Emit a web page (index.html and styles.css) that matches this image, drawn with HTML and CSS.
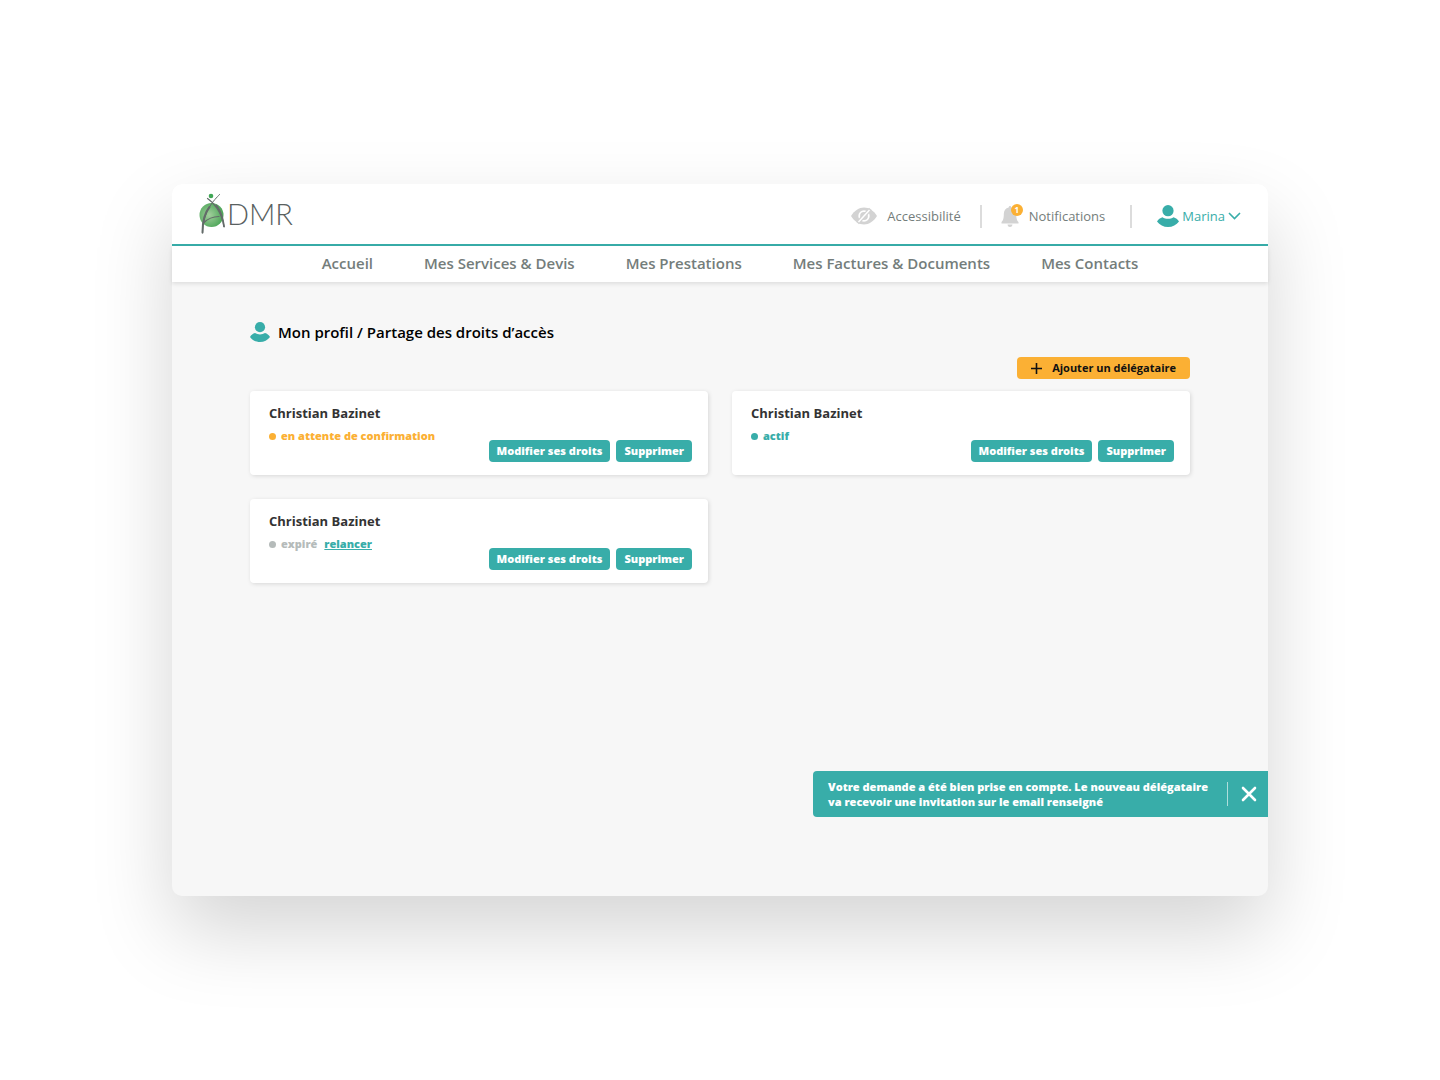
FILE: index.html
```html
<!DOCTYPE html>
<html lang="fr">
<head>
    <meta charset="UTF-8">
    <meta name="viewport" content="width=device-width, initial-scale=1.0">
    <title>ADMR - Partage des droits d’accès</title>
    <link rel="stylesheet" href="styles.css">
</head>
<body>
    <div class="window">
        <header class="header">
            <a class="logo" href="#" aria-label="ADMR">
                <svg width="28" height="42" viewBox="0 0 28 42">
                    <defs>
                        <radialGradient id="globe" cx="40%" cy="50%" r="60%">
                            <stop offset="0" stop-color="#a3cf9d"/>
                            <stop offset="1" stop-color="#4ba557"/>
                        </radialGradient>
                    </defs>
                    <circle cx="12.500" cy="22" r="12" fill="url(#globe)"/>
                    <circle cx="12" cy="3" r="2.300" fill="#3fa655"/>
                    <g fill="none" stroke="#636b69" stroke-linecap="round">
                        <path d="M8.500 5.500C14 9 23 19 25 33.500" stroke-width="1.200"/>
                        <path d="M20.500 1.500C15.500 7 4 17 3.500 40" stroke-width="1"/>
                        <path d="M10.500 14C5.500 20 3.500 29 3.500 39.500" stroke-width="2"/>
                        <path d="M17.500 12.500C21.500 18 24 25 25 33.500" stroke-width="1.800"/>
                        <path d="M4.500 30C8 26.500 12 23.500 20 23.500" stroke-width="1.200"/>
                    </g>
                </svg>
                <span class="logo-text">DMR</span>
            </a>
            <div class="tools">
                <a class="tool" href="#">
                    <svg class="eye" width="26" height="18" viewBox="0 0 26 18">
                        <path d="M0 9C3.500 3.500 8 .5 13 .5S22.500 3.500 26 9C22.500 14.500 18 17.500 13 17.500S3.500 14.500 0 9Z" fill="#d3d3d3"/>
                        <circle cx="13" cy="9" r="4.800" fill="none" stroke="#fff" stroke-width="1.800"/>
                        <path d="M6.500 16L19.500 2" stroke="#d3d3d3" stroke-width="4"/>
                        <path d="M7.500 15L18.500 3" stroke="#fff" stroke-width="1.500"/>
                    </svg>
                    Accessibilité
                </a>
                <span class="divider"></span>
                <a class="tool" href="#">
                    <span class="bell">
                        <svg width="18" height="21" viewBox="0 0 18 21">
                            <path d="M9 0C9.800 0 10.300.6 10.300 1.500C13.500 2.200 15.200 4.800 15.200 8C15.200 13 16 14.500 17.500 16V17.500H.5V16C2 14.500 2.800 13 2.800 8C2.800 4.800 4.500 2.200 7.700 1.500C7.700.6 8.200 0 9 0ZM6.500 18.500H11.500C11.300 20.200 10.300 21 9 21S6.700 20.200 6.500 18.500Z" fill="#d3d3d3"/>
                        </svg>
                        <span class="badge">1</span>
                    </span>
                    Notifications
                </a>
                <span class="divider wide"></span>
                <button class="account" type="button">
                    <svg width="22" height="22" viewBox="0 0 22 22" fill="#38ada9">
                        <circle cx="11" cy="5.700" r="5.600"/>
                        <path d="M0 16.500C1.300 14.300 3.200 12.900 5.500 12.200C8.500 14.200 13.500 14.200 16.500 12.200C18.800 12.900 20.700 14.300 22 16.500C19.500 20 15.500 22 11 22S2.500 20 0 16.500Z"/>
                    </svg>
                    Marina
                    <svg width="13" height="8" viewBox="0 0 13 8">
                        <path d="M1 1L6.500 6.500L12 1" fill="none" stroke="#38ada9" stroke-width="1.600"/>
                    </svg>
                </button>
            </div>
        </header>

        <nav class="nav">
            <a href="#">Accueil</a>
            <a href="#">Mes Services &amp; Devis</a>
            <a href="#">Mes Prestations</a>
            <a href="#">Mes Factures &amp; Documents</a>
            <a href="#">Mes Contacts</a>
        </nav>

        <main class="content">
            <h1 class="title">
                <svg width="20" height="20" viewBox="0 0 22 22" fill="#38ada9">
                    <circle cx="11" cy="5.700" r="5.600"/>
                    <path d="M0 16.500C1.300 14.300 3.200 12.900 5.500 12.200C8.500 14.200 13.500 14.200 16.500 12.200C18.800 12.900 20.700 14.300 22 16.500C19.500 20 15.500 22 11 22S2.500 20 0 16.500Z"/>
                </svg>
                Mon profil / Partage des droits d’accès
            </h1>

            <button class="button add" type="button">
                <svg width="11" height="11" viewBox="0 0 11 11">
                    <path d="M5.500 0V11M0 5.500H11" stroke="#111" stroke-width="1.600"/>
                </svg>
                Ajouter un délégataire
            </button>

            <div class="cards">
                <section class="card">
                    <h2>Christian Bazinet</h2>
                    <p class="status pending">en attente de confirmation</p>
                    <div class="actions">
                        <button class="button" type="button">Modifier ses droits</button>
                        <button class="button" type="button">Supprimer</button>
                    </div>
                </section>
                <section class="card">
                    <h2>Christian Bazinet</h2>
                    <p class="status active">actif</p>
                    <div class="actions">
                        <button class="button" type="button">Modifier ses droits</button>
                        <button class="button" type="button">Supprimer</button>
                    </div>
                </section>
                <section class="card">
                    <h2>Christian Bazinet</h2>
                    <p class="status expired">expiré <a href="#">relancer</a></p>
                    <div class="actions">
                        <button class="button" type="button">Modifier ses droits</button>
                        <button class="button" type="button">Supprimer</button>
                    </div>
                </section>
            </div>
        </main>

        <!-- Message de confirmation -->
        <div class="toast" role="status">
            <p>Votre demande a été bien prise en compte. Le nouveau délégataire va recevoir une invitation sur le email renseigné</p>
            <button class="close" type="button" aria-label="Fermer">
                <svg width="16" height="16" viewBox="0 0 16 16">
                    <path d="M2 2L14 14M14 2L2 14" stroke="#fff" stroke-width="2.600" stroke-linecap="round"/>
                </svg>
            </button>
        </div>
    </div>
</body>
</html>
```

FILE: styles.css
```css
* {
    box-sizing: border-box;
}

body {
    display: flex;
    min-height: 100vh;
    margin: 0;
    padding: 184px 172px;
    background-color: #fff;
    font-family: "Open Sans", "Noto Sans", sans-serif;
}

h1, h2, p {
    margin: 0;
}

a {
    color: inherit;
    text-decoration: none;
}

button {
    border: none;
    font-family: inherit;
    cursor: pointer;
}

.window {
    position: relative;
    display: flex;
    flex-direction: column;
    flex: 1;
    background-color: #f7f7f7;
    border-radius: 10px;
    box-shadow: 0 35px 80px rgba(0, 0, 0, 0.17);
}

/* En-tête */
.header {
    display: flex;
    align-items: center;
    justify-content: space-between;
    height: 62px;
    padding: 0 27px;
    background-color: #fff;
    border-bottom: 2px solid #38ada9;
    border-radius: 10px 10px 0 0;
}

.logo {
    display: flex;
    align-items: center;
}

.logo-text {
    color: #59615f;
    font-family: Lato, sans-serif;
    font-size: 29px;
    font-weight: 300;
    line-height: 40px;
}

.tools {
    display: flex;
    align-items: center;
    padding-top: 4px;
    color: #747d7b;
    font-size: 13px;
    line-height: 20px;
}

.tool {
    display: flex;
    align-items: center;
    gap: 10px;
}

.divider {
    width: 2px;
    height: 23px;
    margin: 0 19px;
    background-color: #dcdcdc;
}

.divider.wide {
    margin: 0 25px;
}

.bell {
    position: relative;
    display: flex;
}

.badge {
    position: absolute;
    top: -2px;
    right: -4px;
    width: 12px;
    height: 12px;
    border-radius: 50%;
    background-color: #fbb034;
    color: #fff;
    font-size: 8px;
    font-weight: 700;
    line-height: 12px;
    text-align: center;
}

.account {
    display: flex;
    align-items: center;
    gap: 3px;
    padding: 0;
    background: none;
    color: #38ada9;
    font-size: 13px;
    line-height: 20px;
}

/* Menu principal */
.nav {
    display: flex;
    align-items: center;
    justify-content: center;
    gap: 51px;
    height: 36px;
    padding: 0 0 3px 20px;
    background-color: #fff;
    box-shadow: 0 2px 4px rgba(0, 0, 0, 0.1);
    color: #747d7b;
    font-size: 15px;
    font-weight: 600;
}

/* Contenu */
.content {
    display: flex;
    flex-direction: column;
    flex: 1;
    padding: 38px 78px;
}

.title {
    display: flex;
    align-items: center;
    gap: 8px;
    margin-bottom: 13px;
    color: #000;
    font-size: 15px;
    font-weight: 600;
    line-height: 24px;
}

.button {
    height: 22px;
    padding: 0 8px;
    border-radius: 4px;
    background-color: #38ada9;
    color: #fff;
    font-size: 11px;
    font-weight: 800;
    line-height: 22px;
}

.add {
    display: flex;
    align-items: center;
    align-self: flex-end;
    gap: 10px;
    margin-bottom: 12px;
    padding: 0 14px;
    background-color: #fbb034;
    color: #111;
    font-weight: 700;
}

.cards {
    display: grid;
    grid-template-columns: 1fr 1fr;
    gap: 24px;
}

.card {
    padding: 12px 16px 13px 19px;
    background-color: #fff;
    border-radius: 4px;
    box-shadow: 1px 1px 4px rgba(0, 0, 0, 0.13);
}

.card h2 {
    color: #333;
    font-size: 13px;
    font-weight: 700;
    line-height: 20px;
}

.status {
    display: flex;
    align-items: center;
    gap: 5px;
    margin-top: 5px;
    font-size: 11px;
    font-weight: 800;
    line-height: 16px;
}

.status::before {
    content: "";
    width: 7px;
    height: 7px;
    border-radius: 50%;
    background-color: currentColor;
}

.status a {
    margin-left: 2px;
    color: #38ada9;
    text-decoration: underline;
}

.pending {
    color: #fbb034;
}

.active {
    color: #38ada9;
}

.expired {
    color: #b5bbba;
}

.actions {
    display: flex;
    justify-content: flex-end;
    gap: 6px;
    margin-top: -4px;
}

/* Notification */
.toast {
    position: absolute;
    right: 0;
    bottom: 79px;
    display: flex;
    align-items: center;
    width: 455px;
    padding: 8px 0 8px 15px;
    background-color: #38ada9;
    border-radius: 4px 0 0 4px;
    color: #fff;
    font-size: 11px;
    font-weight: 800;
    line-height: 15px;
}

.toast p {
    flex: 1;
    padding-right: 15px;
}

.close {
    display: flex;
    align-items: center;
    height: 24px;
    padding: 0 11px 0 13px;
    background: none;
    border-left: 1px solid rgba(255, 255, 255, 0.6);
}
```
